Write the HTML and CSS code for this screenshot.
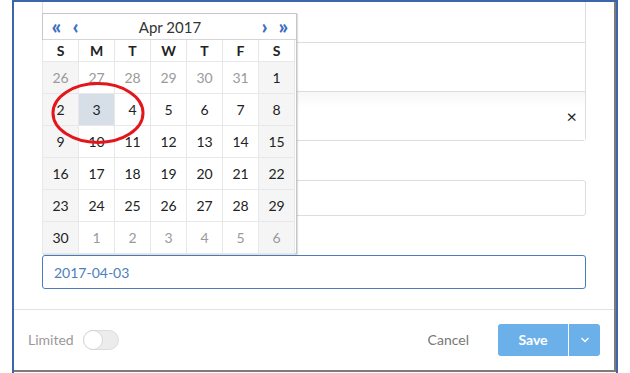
FILE: index.html
```html
<!DOCTYPE html>
<html lang="en">
<head>
    <meta charset="UTF-8">
    <title>Edit item</title>
    <link rel="stylesheet" href="styles.css">
</head>
<body>
    <div class="frame">
        <div class="modal">
            <div class="modal-body">
                <div class="group">
                    <div class="group-item"></div>
                    <div class="group-item"></div>
                    <div class="group-item clearable"><span class="clear">&times;</span></div>
                </div>
                <div class="input"></div>
                <div class="input date-input">2017-04-03</div>
            </div>
            <div class="modal-footer">
                <div class="limited">
                    <span>Limited</span>
                    <span class="toggle"><span class="knob"></span></span>
                </div>
                <div class="actions">
                    <span class="cancel">Cancel</span>
                    <div class="btn-group">
                        <span class="btn-save">Save</span>
                        <span class="btn-caret">
                            <svg width="10" height="6" viewBox="0 0 10 6"><polyline points="1.5,1 5,4.5 8.5,1" fill="none" stroke="#fff" stroke-width="1.4"/></svg>
                        </span>
                    </div>
                </div>
            </div>

            <div class="datepicker">
                <div class="dp-head">
                    <span class="dp-nav">&laquo;</span>
                    <span class="dp-nav">&lsaquo;</span>
                    <span class="dp-title">Apr 2017</span>
                    <span class="dp-nav">&rsaquo;</span>
                    <span class="dp-nav">&raquo;</span>
                </div>
                <table class="dp-table">
                    <thead>
                        <tr><th>S</th><th>M</th><th>T</th><th>W</th><th>T</th><th>F</th><th>S</th></tr>
                    </thead>
                    <tbody>
                        <tr><td class="we old">26</td><td class="old">27</td><td class="old">28</td><td class="old">29</td><td class="old">30</td><td class="old">31</td><td class="we">1</td></tr>
                        <tr><td class="we">2</td><td class="active">3</td><td>4</td><td>5</td><td>6</td><td>7</td><td class="we">8</td></tr>
                        <tr><td class="we">9</td><td>10</td><td>11</td><td>12</td><td>13</td><td>14</td><td class="we">15</td></tr>
                        <tr><td class="we">16</td><td>17</td><td>18</td><td>19</td><td>20</td><td>21</td><td class="we">22</td></tr>
                        <tr><td class="we">23</td><td>24</td><td>25</td><td>26</td><td>27</td><td>28</td><td class="we">29</td></tr>
                        <tr><td class="we">30</td><td class="old">1</td><td class="old">2</td><td class="old">3</td><td class="old">4</td><td class="old">5</td><td class="we old">6</td></tr>
                    </tbody>
                </table>
            </div>

            <svg class="mark" width="100" height="66" viewBox="0 0 100 66">
                <ellipse cx="48" cy="33" rx="45" ry="29.5" fill="none" stroke="#e2161b" stroke-width="3"/>
            </svg>
        </div>
    </div>
</body>
</html>
```

FILE: styles.css
```css
html, body {
    margin: 0;
    padding: 0;
    background: #fff;
    overflow: hidden;
}
body {
    font-family: Lato, "Open Sans", sans-serif;
    font-size: 14px;
    color: #333;
}
.frame {
    margin-left: 12px;
    width: 602px;
    height: 371px;
    border: 2px solid #3d65a8;
    border-bottom-width: 1px;
}
.modal {
    position: relative;
    width: 600px;
    height: 368px;
    background: #fff;
    border-right: 2px solid #7b7b7b;
    border-bottom: 2px solid #7b7b7b;
    overflow: hidden;
}
.modal-body {
    padding: 0 28px 20px 28px;
}
.group {
    margin-top: -9px;
    border: 1px solid #ddd;
    border-radius: 0 0 3px 3px;
}
.group-item {
    height: 48px;
    border-bottom: 1px solid #ddd;
}
.group-item:last-child {
    border-bottom: none;
}
.clearable {
    display: flex;
    align-items: center;
    justify-content: flex-end;
    padding-right: 8px;
    background: linear-gradient(#f7f7f7, #fff 30%);
}
.clear {
    font-size: 18px;
    color: #222;
    line-height: 1;
}
.input {
    height: 34px;
    margin-top: 39px;
    border: 1px solid #ddd;
    border-radius: 3px;
}
.date-input {
    height: 32px;
    border-color: #4a7db9;
    display: flex;
    align-items: center;
    padding-left: 11px;
    color: #4c7fbd;
    font-size: 14px;
}
.modal-footer {
    height: 59px;
    border-top: 1px solid #e2e2e2;
    display: flex;
    align-items: center;
    justify-content: space-between;
    padding: 0 14px;
}
.limited {
    display: flex;
    align-items: center;
    color: #999;
    gap: 9px;
}
.toggle {
    width: 34px;
    height: 18px;
    border: 1px solid #ddd;
    border-radius: 10px;
    background: #ececec;
    position: relative;
}
.knob {
    position: absolute;
    left: -1px;
    top: -1px;
    width: 18px;
    height: 18px;
    border-radius: 50%;
    background: #fff;
    border: 1px solid #d6d6d6;
}
.actions {
    display: flex;
    align-items: center;
    gap: 29px;
}
.cancel {
    color: #777;
}
.btn-group {
    display: flex;
    height: 32px;
    border-radius: 3px;
    overflow: hidden;
    background: #6cb0ea;
    color: #fff;
}
.btn-save {
    width: 70px;
    display: flex;
    align-items: center;
    justify-content: center;
    font-weight: bold;
    border-right: 1px solid #fff;
}
.btn-caret {
    width: 31px;
    display: flex;
    align-items: center;
    justify-content: center;
}
.datepicker {
    position: absolute;
    left: 28px;
    top: 11px;
    width: 253px;
    background: #fff;
    border: 1px solid #c6c6c6;
    box-shadow: 1px 1px 1px rgba(0,0,0,0.12);
}
.dp-head {
    height: 25px;
    display: flex;
    align-items: center;
    padding: 0 3px 0 4px;
    border-bottom: 1px solid #d6d6d6;
}
.dp-nav {
    color: #3d6dc0;
    font-weight: 900;
    font-size: 21px;
    width: 19px;
    text-align: center;
    line-height: 1;
    margin-top: -3px;
}
.dp-title {
    flex: 1;
    text-align: center;
    font-size: 15px;
    color: #333;
}
.dp-table {
    border-collapse: collapse;
    width: 253px;
    margin: 0 -1px -1px -1px;
}
.dp-table th {
    height: 21px;
    font-weight: bold;
    font-size: 14px;
    color: #222;
    border-left: 1px solid #e6e6e6;
    border-right: 1px solid #e6e6e6;
    padding: 0;
}
.dp-table td {
    width: 35px;
    height: 31px;
    padding: 0;
    text-align: center;
    border: 1px solid #e8e8e8;
    color: #222;
}
.dp-table td.we {
    background: #f5f5f5;
}
.dp-table td.old {
    color: #9a9a9a;
}
.dp-table td.active {
    background: #d6dee8;
}
.mark {
    position: absolute;
    left: 36px;
    top: 78px;
}
```
